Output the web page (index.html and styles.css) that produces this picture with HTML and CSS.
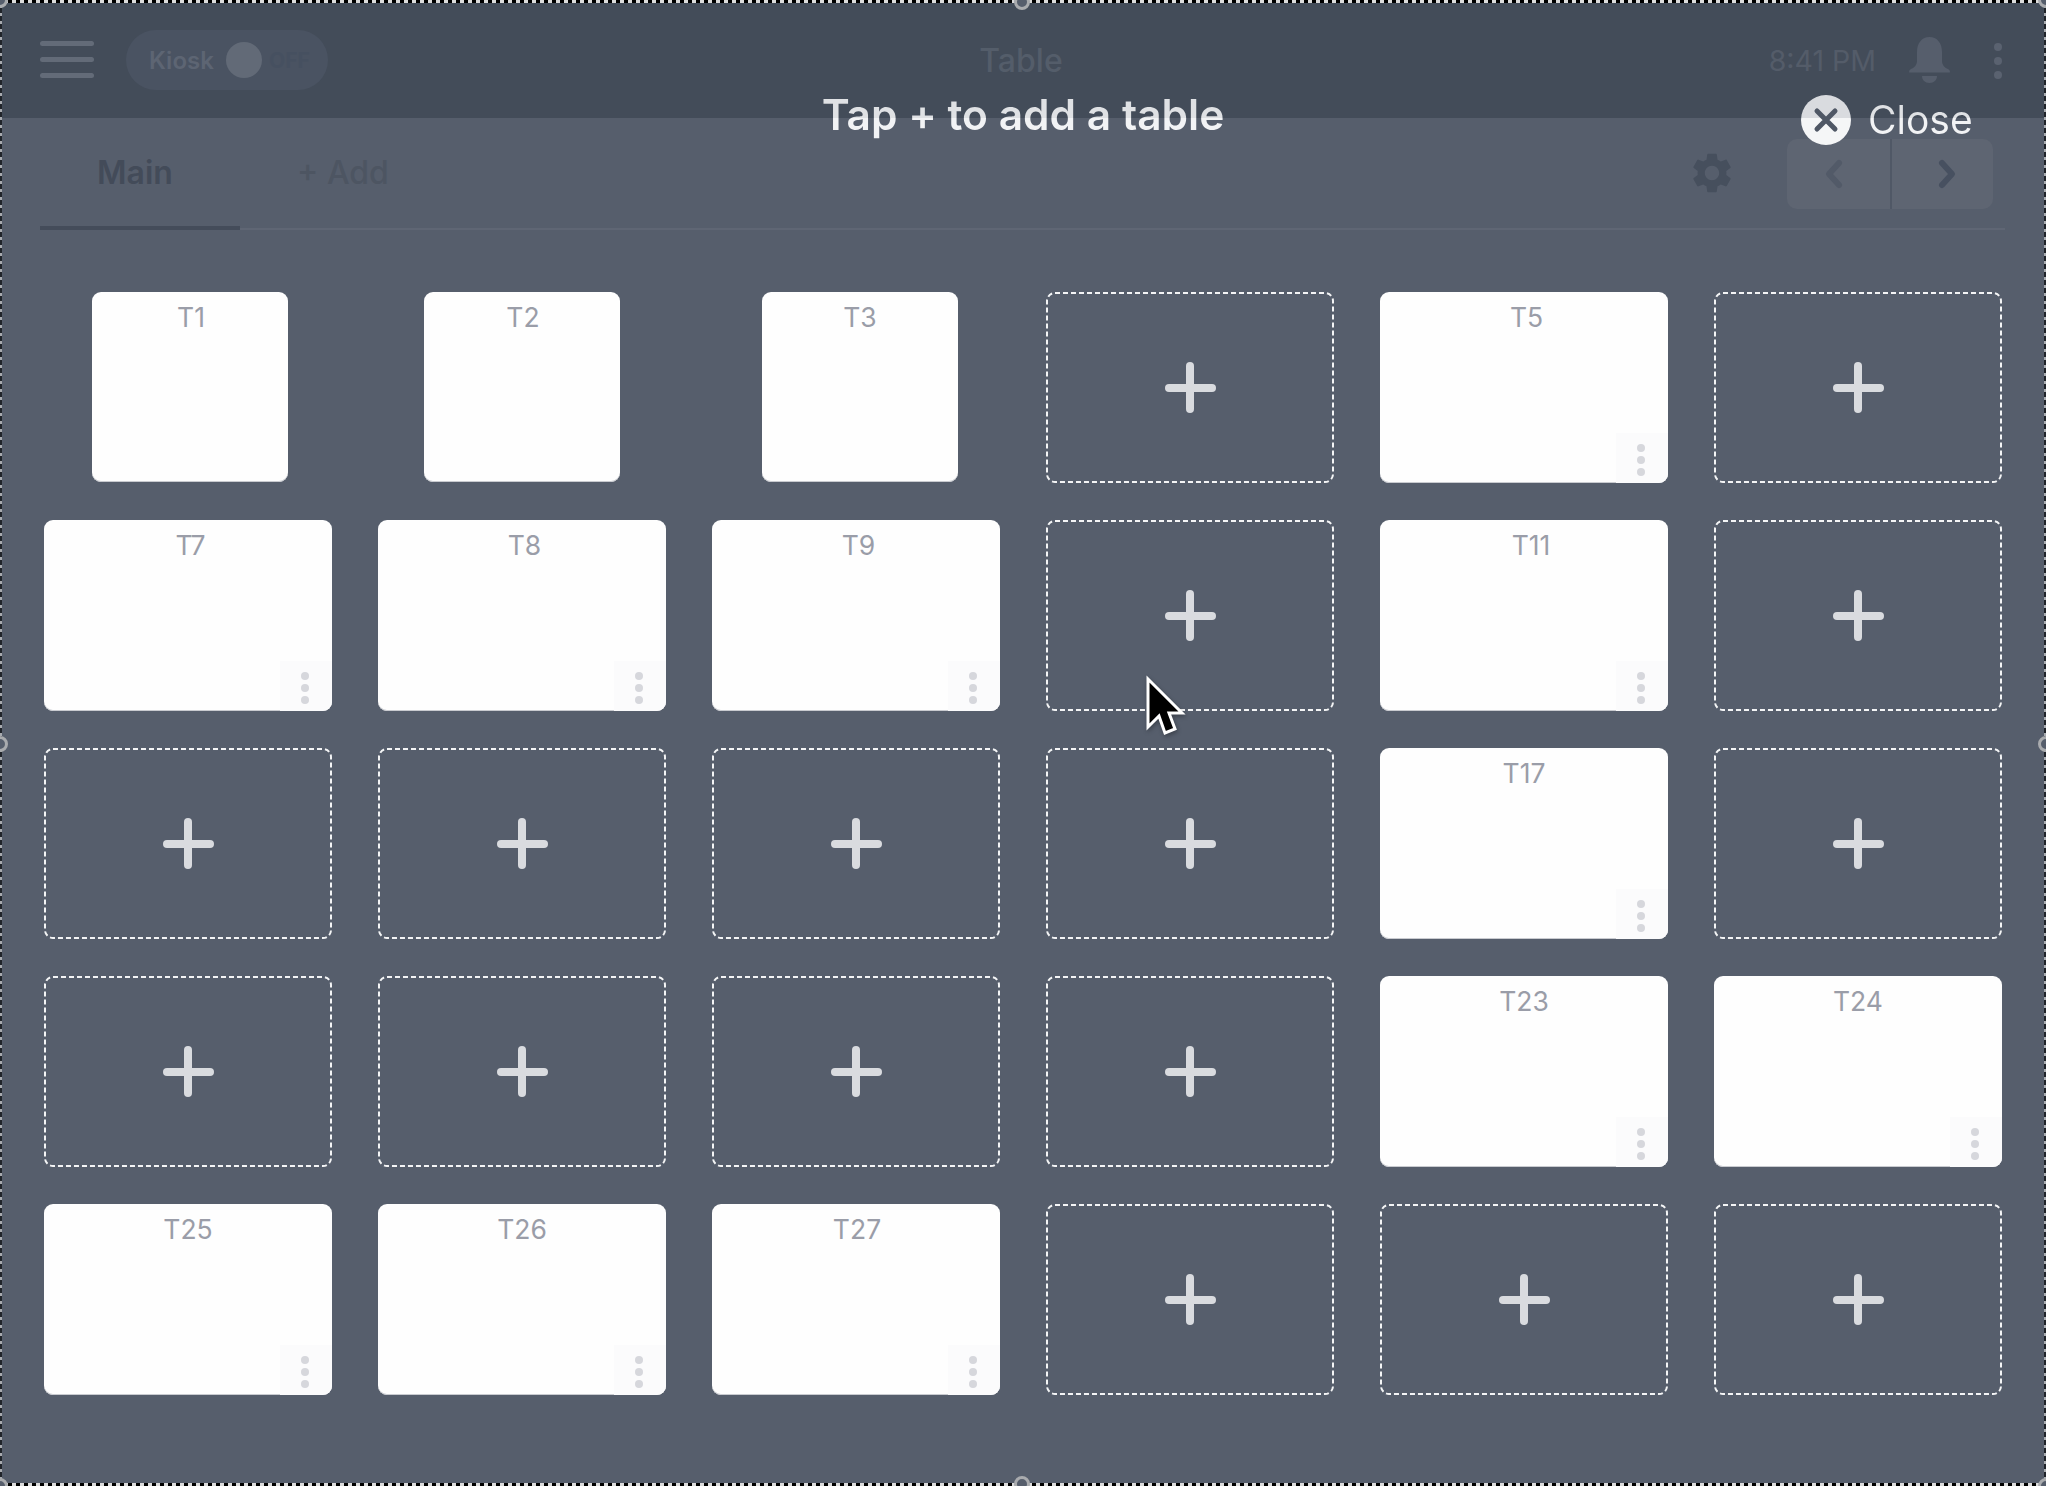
FILE: index.html
```html
<!DOCTYPE html>
<html lang="en">
<head>
    <meta charset="UTF-8">
    <title>Table</title>
    <link rel="stylesheet" href="styles.css">
</head>
<body>
    <div class="screen">
        <header class="topbar">
            <div class="topbar-left">
                <div class="burger"><span></span><span></span><span></span></div>
                <div class="kiosk">
                    <span class="kiosk-label">Kiosk</span>
                    <span class="kiosk-knob"></span>
                    <span class="kiosk-state">OFF</span>
                </div>
            </div>
            <div class="topbar-title">Table</div>
            <div class="topbar-right">
                <span class="clock">8:41 PM</span>
                <svg class="bell" width="41" height="46" viewBox="0 0 41 46"><path d="M20.5 0C28 0 33 6 33 15V24C33 28 36 31 39 32Q41 33 41 35Q41 35.5 40 35.5H1Q0 35.5 0 35Q0 33 2 32C5 31 8 28 8 24V15C8 6 13 0 20.5 0ZM13 39H28C28 43 25 46 20.5 46C16 46 13 43 13 39Z"/></svg>
                <div class="kebab"><span></span><span></span><span></span></div>
            </div>
        </header>

        <nav class="tabbar">
            <div class="tab tab-active">Main</div>
            <div class="tab tab-add">+ Add</div>
            <div class="tabbar-tools">
                <svg class="gear" width="48" height="48" viewBox="0 0 24 24"><path d="M19.14 12.94c.04-.3.06-.61.06-.94 0-.32-.02-.64-.07-.94l2.03-1.58c.18-.14.23-.41.12-.61l-1.92-3.32c-.12-.22-.37-.29-.59-.22l-2.39.96c-.5-.38-1.03-.7-1.62-.94l-.36-2.54c-.04-.24-.24-.41-.48-.41h-3.84c-.24 0-.43.17-.47.41l-.36 2.54c-.59.24-1.13.57-1.62.94l-2.39-.96c-.22-.08-.47 0-.59.22L2.74 8.87c-.12.21-.08.47.12.61l2.03 1.58c-.05.3-.09.63-.09.94s.02.64.07.94l-2.03 1.58c-.18.14-.23.41-.12.61l1.92 3.32c.12.22.37.29.59.22l2.39-.96c.5.38 1.03.7 1.62.94l.36 2.54c.05.24.24.41.48.41h3.84c.24 0 .44-.17.47-.41l.36-2.54c.59-.24 1.13-.56 1.62-.94l2.39.96c.22.08.47 0 .59-.22l1.92-3.32c.12-.22.07-.47-.12-.61l-2.01-1.58zM12 15.6c-1.98 0-3.6-1.62-3.6-3.6s1.62-3.6 3.6-3.6 3.6 1.62 3.6 3.6-1.62 3.6-3.6 3.6z"/></svg>
                <div class="pager">
                    <div class="pager-btn pager-prev"><svg width="22" height="34" viewBox="0 0 22 34"><path d="M16 6L6 17L16 28"/></svg></div>
                    <div class="pager-btn pager-next"><svg width="22" height="34" viewBox="0 0 22 34"><path d="M6 6L16 17L6 28"/></svg></div>
                </div>
            </div>
        </nav>

        <main class="floor">
            <div class="card card-small card-t1"><span class="card-name nudge-1">T1</span></div>
            <div class="card card-small card-t2"><span class="card-name nudge-1">T2</span></div>
            <div class="card card-small card-t3"><span class="card-name">T3</span></div>
            <div class="slot"><svg class="slot-line" width="288" height="191"><rect x="1" y="1" width="286" height="189" rx="8"/></svg><span class="plus"></span></div>
            <div class="card"><span class="card-name nudge-3">T5</span><div class="card-menu"><span></span><span></span><span></span></div></div>
            <div class="slot"><svg class="slot-line" width="288" height="191"><rect x="1" y="1" width="286" height="189" rx="8"/></svg><span class="plus"></span></div>

            <div class="card"><span class="card-name nudge-3">T7</span><div class="card-menu"><span></span><span></span><span></span></div></div>
            <div class="card"><span class="card-name nudge-3">T8</span><div class="card-menu"><span></span><span></span><span></span></div></div>
            <div class="card"><span class="card-name nudge-3">T9</span><div class="card-menu"><span></span><span></span><span></span></div></div>
            <div class="slot"><svg class="slot-line" width="288" height="191"><rect x="1" y="1" width="286" height="189" rx="8"/></svg><span class="plus"></span></div>
            <div class="card"><span class="card-name nudge-7">T11</span><div class="card-menu"><span></span><span></span><span></span></div></div>
            <div class="slot"><svg class="slot-line" width="288" height="191"><rect x="1" y="1" width="286" height="189" rx="8"/></svg><span class="plus"></span></div>

            <div class="slot"><svg class="slot-line" width="288" height="191"><rect x="1" y="1" width="286" height="189" rx="8"/></svg><span class="plus"></span></div>
            <div class="slot"><svg class="slot-line" width="288" height="191"><rect x="1" y="1" width="286" height="189" rx="8"/></svg><span class="plus"></span></div>
            <div class="slot"><svg class="slot-line" width="288" height="191"><rect x="1" y="1" width="286" height="189" rx="8"/></svg><span class="plus"></span></div>
            <div class="slot"><svg class="slot-line" width="288" height="191"><rect x="1" y="1" width="286" height="189" rx="8"/></svg><span class="plus"></span></div>
            <div class="card"><span class="card-name">T17</span><div class="card-menu"><span></span><span></span><span></span></div></div>
            <div class="slot"><svg class="slot-line" width="288" height="191"><rect x="1" y="1" width="286" height="189" rx="8"/></svg><span class="plus"></span></div>

            <div class="slot"><svg class="slot-line" width="288" height="191"><rect x="1" y="1" width="286" height="189" rx="8"/></svg><span class="plus"></span></div>
            <div class="slot"><svg class="slot-line" width="288" height="191"><rect x="1" y="1" width="286" height="189" rx="8"/></svg><span class="plus"></span></div>
            <div class="slot"><svg class="slot-line" width="288" height="191"><rect x="1" y="1" width="286" height="189" rx="8"/></svg><span class="plus"></span></div>
            <div class="slot"><svg class="slot-line" width="288" height="191"><rect x="1" y="1" width="286" height="189" rx="8"/></svg><span class="plus"></span></div>
            <div class="card"><span class="card-name">T23</span><div class="card-menu"><span></span><span></span><span></span></div></div>
            <div class="card"><span class="card-name">T24</span><div class="card-menu"><span></span><span></span><span></span></div></div>

            <div class="card"><span class="card-name">T25</span><div class="card-menu"><span></span><span></span><span></span></div></div>
            <div class="card"><span class="card-name">T26</span><div class="card-menu"><span></span><span></span><span></span></div></div>
            <div class="card"><span class="card-name nudge-1">T27</span><div class="card-menu"><span></span><span></span><span></span></div></div>
            <div class="slot"><svg class="slot-line" width="288" height="191"><rect x="1" y="1" width="286" height="189" rx="8"/></svg><span class="plus"></span></div>
            <div class="slot"><svg class="slot-line" width="288" height="191"><rect x="1" y="1" width="286" height="189" rx="8"/></svg><span class="plus"></span></div>
            <div class="slot"><svg class="slot-line" width="288" height="191"><rect x="1" y="1" width="286" height="189" rx="8"/></svg><span class="plus"></span></div>
        </main>

        <div class="hint">Tap + to add a table</div>
        <div class="close">
            <span class="close-icon"><svg width="26" height="26" viewBox="0 0 26 26"><path d="M4 4L22 22M22 4L4 22"/></svg></span>
            <span class="close-text">Close</span>
        </div>

        <svg class="pointer" width="42" height="62" viewBox="-4 -4 42 62"><path d="M0 0V48L11 37L17 54L27 50L21 34H34Z"/></svg>

        <div class="ants ants-top"></div>
        <div class="ants ants-bottom"></div>
        <div class="ants ants-left"></div>
        <div class="ants ants-right"></div>
        <span class="handle handle-tl"></span>
        <span class="handle handle-tc"></span>
        <span class="handle handle-tr"></span>
        <span class="handle handle-ml"></span>
        <span class="handle handle-mr"></span>
        <span class="handle handle-bl"></span>
        <span class="handle handle-bc"></span>
        <span class="handle handle-br"></span>
    </div>
</body>
</html>
```

FILE: styles.css
```css
* {
    box-sizing: border-box;
}
body {
    margin: 0;
    font-family: Inter, "Liberation Sans", sans-serif;
    background-color: #565e6c;
}
.screen {
    position: relative;
    width: 2046px;
    height: 1486px;
    overflow: hidden;
    background-color: #565e6c;
}

/* top bar */
.topbar {
    display: grid;
    grid-template-columns: 1fr auto 1fr;
    align-items: center;
    height: 118px;
    padding: 0 44px 0 40px;
    background-color: #434c59;
}
.topbar-left {
    display: flex;
    align-items: center;
    gap: 32px;
}
.burger {
    display: flex;
    flex-direction: column;
    gap: 11px;
    width: 54px;
}
.burger span {
    height: 5px;
    border-radius: 3px;
    background-color: #636b78;
}
.kiosk {
    display: flex;
    align-items: center;
    width: 202px;
    height: 60px;
    margin-top: 2px;
    padding-left: 23px;
    border-radius: 30px;
    background-color: #4a5362;
}
.kiosk-label {
    width: 77px;
    font-size: 24px;
    font-weight: 600;
    color: #5d6573;
}
.kiosk-knob {
    width: 36px;
    height: 36px;
    border-radius: 50%;
    background-color: #626a77;
}
.kiosk-state {
    margin-left: 7px;
    font-size: 21px;
    font-weight: 700;
    color: #465060;
}
.topbar-title {
    padding-top: 2px;
    font-size: 32px;
    font-weight: 500;
    color: #545d6a;
}
.topbar-right {
    display: flex;
    align-items: center;
    justify-content: flex-end;
}
.clock {
    padding-top: 2px;
    font-size: 28.5px;
    color: #545c69;
}
.bell {
    margin: 2px 0 0 33px;
    fill: #565e6c;
}
.kebab {
    display: flex;
    flex-direction: column;
    gap: 6px;
    margin: 3px 0 0 44px;
}
.kebab span {
    width: 8px;
    height: 8px;
    border-radius: 50%;
    background-color: #5a6270;
}

/* tabs */
.tabbar {
    display: flex;
    align-items: stretch;
    height: 112px;
    margin: 0 41px 0 40px;
    border-bottom: 2px solid #5f6674;
}
.tab {
    display: flex;
    align-items: center;
    height: 112px;
    font-size: 32px;
}
.tab-active {
    justify-content: center;
    width: 200px;
    padding-right: 10px;
    border-bottom: 4px solid #444c5a;
    font-weight: 600;
    color: #434b59;
}
.tab-add {
    margin-left: 57px;
    padding-bottom: 3px;
    font-weight: 500;
    color: #4d5562;
}
.tabbar-tools {
    display: flex;
    align-items: center;
    gap: 51px;
    margin-left: auto;
    padding: 1px 12px 0 0;
}
.gear {
    margin-top: -2px;
    fill: #464f5d;
}
.pager {
    display: flex;
    width: 206px;
    height: 70px;
    border-radius: 10px;
    background-color: #5e6572;
}
.pager-btn {
    display: flex;
    flex: 1;
    align-items: center;
    justify-content: center;
}
.pager-prev {
    padding-right: 10px;
    border-right: 2px solid #505866;
}
.pager-next {
    padding-left: 8px;
}
.pager-btn svg {
    fill: none;
    stroke-width: 6;
    stroke-linecap: round;
    stroke-linejoin: round;
}
.pager-prev svg {
    stroke: #525a68;
}
.pager-next svg {
    stroke: #475060;
}

/* table grid */
.floor {
    display: grid;
    grid-template-columns: repeat(6, 288px);
    grid-auto-rows: 191px;
    column-gap: 46px;
    row-gap: 37px;
    padding: 62px 0 0 44px;
}
.card {
    position: relative;
    display: flex;
    justify-content: center;
    padding-top: 10px;
    border-radius: 9px;
    background-color: #fefefe;
    box-shadow: inset 0 -1px 0 #c9cbd0;
}
.card-small {
    width: 196px;
    height: 190px;
}
.card-t1 {
    margin-left: 48px;
}
.card-t2 {
    margin-left: 46px;
}
.card-t3 {
    margin-left: 50px;
}
.card-name {
    height: 30px;
    font-size: 26.5px;
    line-height: 30px;
    color: #9a9da8;
}
.nudge-1 {
    margin-left: 2px;
}
.nudge-3 {
    margin-left: 5px;
}
.nudge-7 {
    margin-left: 14px;
}
.card-menu {
    position: absolute;
    right: 0;
    bottom: 0;
    display: flex;
    flex-direction: column;
    align-items: center;
    gap: 4px;
    width: 52px;
    height: 50px;
    padding: 11px 3px 0 0;
    border-radius: 0 0 9px 0;
    background-color: #fbfbfc;
}
.card-menu span {
    width: 8px;
    height: 8px;
    border-radius: 50%;
    background-color: #d6d7dc;
}
.slot {
    position: relative;
    display: flex;
    align-items: center;
    justify-content: center;
}
.slot-line {
    position: absolute;
    top: 0;
    left: 0;
}
.slot-line rect {
    fill: none;
    stroke: #f4f5f6;
    stroke-width: 2;
    stroke-dasharray: 5 3;
}
.plus {
    position: relative;
    width: 51px;
    height: 51px;
}
.plus::before, .plus::after {
    content: "";
    position: absolute;
    border-radius: 4px;
    background-color: #d9dbdf;
}
.plus::before {
    left: 0;
    top: 21.5px;
    width: 51px;
    height: 8px;
}
.plus::after {
    left: 21.5px;
    top: 0;
    width: 8px;
    height: 51px;
}

/* tutorial overlay */
.hint {
    position: absolute;
    top: 90px;
    left: 0;
    width: 100%;
    font-size: 42.5px;
    line-height: 50px;
    font-weight: 600;
    text-align: center;
    color: #f0f1f3;
    background-image: linear-gradient(to bottom, #dfe1e4 28px, #f2f3f5 28px);
    -webkit-background-clip: text;
    background-clip: text;
    -webkit-text-fill-color: transparent;
}
.close {
    position: absolute;
    top: 95px;
    left: 1801px;
    display: flex;
    align-items: center;
    gap: 17px;
}
.close-icon {
    display: flex;
    align-items: center;
    justify-content: center;
    width: 50px;
    height: 50px;
    border-radius: 50%;
    background-image: linear-gradient(to bottom, #d9dbdf 23px, #f5f6f7 23px);
}
.close-icon svg {
    fill: none;
    stroke: #4f5765;
    stroke-width: 5;
    stroke-linecap: round;
}
.close-text {
    font-size: 39px;
    line-height: 50px;
    color: #f0f1f3;
    background-image: linear-gradient(to bottom, #dfe1e4 23px, #f2f3f5 23px);
    -webkit-background-clip: text;
    background-clip: text;
    -webkit-text-fill-color: transparent;
}
.pointer {
    position: absolute;
    top: 675px;
    left: 1144px;
    filter: drop-shadow(1px 2px 2px rgba(0, 0, 0, 0.3));
}
.pointer path {
    fill: #000;
    stroke: #fff;
    stroke-width: 3;
}

/* selection frame of the screen recording */
.ants {
    position: absolute;
}
.ants-top, .ants-bottom {
    left: 0;
    width: 100%;
    height: 3px;
    background-image: repeating-linear-gradient(to right, #000 0, #000 4px, #dcdcdc 4px, #dcdcdc 8px);
}
.ants-top {
    top: 0;
}
.ants-bottom {
    bottom: 0;
}
.ants-left, .ants-right {
    top: 0;
    width: 2px;
    height: 100%;
    background-image: repeating-linear-gradient(to bottom, #20242a 0, #20242a 5px, #a8abb0 5px, #a8abb0 8px);
}
.ants-left {
    left: 0;
}
.ants-right {
    right: 0;
}
.handle {
    position: absolute;
    width: 16px;
    height: 16px;
    border: 3px solid #a9abae;
    border-radius: 50%;
    background-color: #565e6c;
}
.handle-tl {
    top: -8px;
    left: -8px;
}
.handle-tc {
    top: -6px;
    left: 1014px;
}
.handle-tr {
    top: -8px;
    right: -8px;
}
.handle-ml {
    top: 736px;
    left: -8px;
}
.handle-mr {
    top: 736px;
    right: -8px;
}
.handle-bl {
    bottom: -8px;
    left: -8px;
}
.handle-bc {
    bottom: -6px;
    left: 1014px;
}
.handle-br {
    bottom: -8px;
    right: -8px;
}
```
